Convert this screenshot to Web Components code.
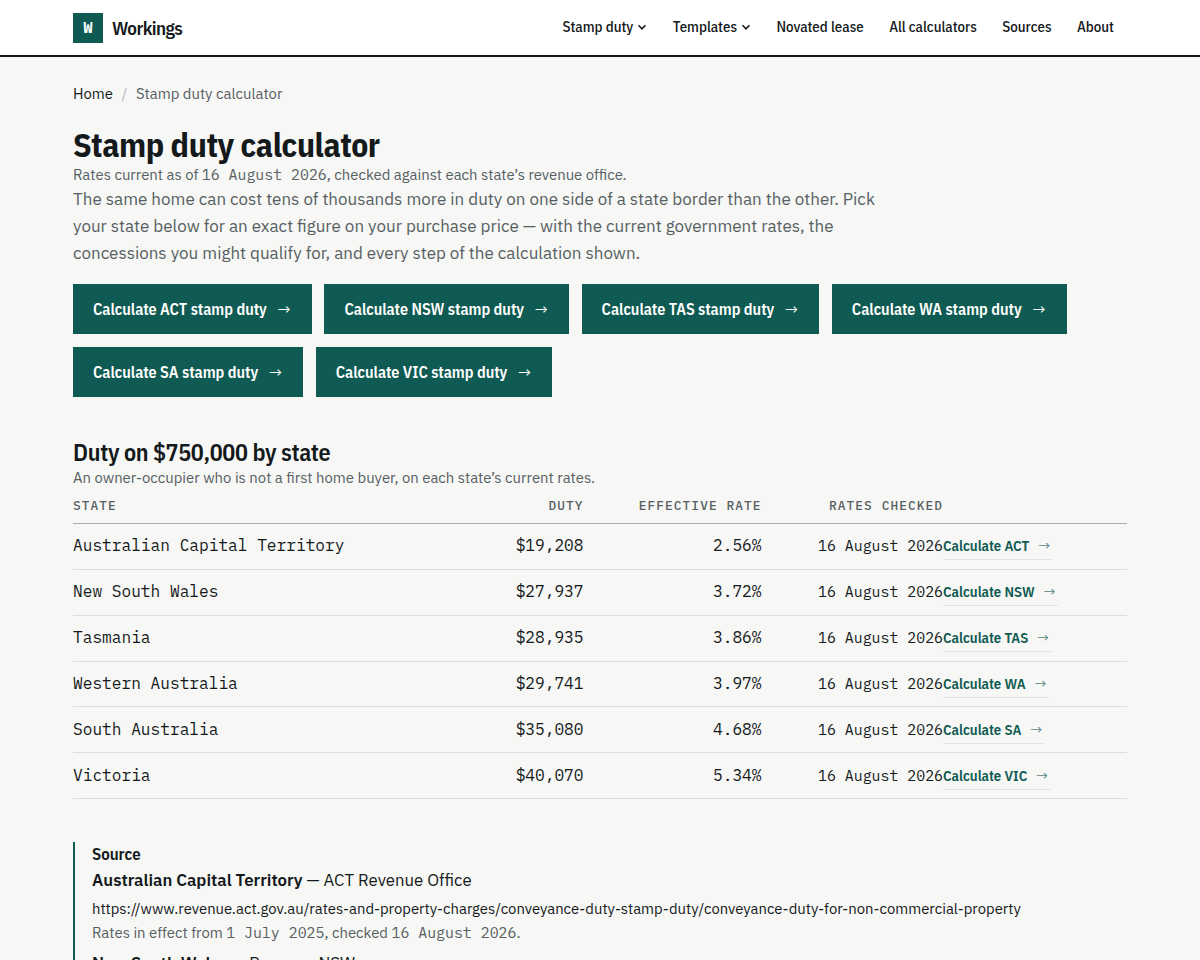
<!doctype html>
<html lang="en">
<head>
<meta charset="utf-8">
<title>Stamp duty calculator</title>
<style>
  html, body { margin: 0; height: 960px; overflow: hidden; }
  body {
    background: #f7f7f5;
    color: #14191b;
    font-family: "IBM Plex Sans", "Noto Sans", "Liberation Sans", sans-serif;
  }
</style>
</head>
<body>
<site-header></site-header>
<page-main>
  <bread-crumbs></bread-crumbs>
  <page-intro></page-intro>
  <state-buttons></state-buttons>
  <duty-table></duty-table>
  <source-list></source-list>
</page-main>

<script>
const MONO = `"IBM Plex Mono", "Liberation Mono", monospace`;
const COND = `"IBM Plex Sans Condensed", "IBM Plex Sans", "Noto Sans", sans-serif`;

const STATES = [
  { code: 'ACT', name: 'Australian Capital Territory', duty: '$19,208', rate: '2.56%' },
  { code: 'NSW', name: 'New South Wales', duty: '$27,937', rate: '3.72%' },
  { code: 'TAS', name: 'Tasmania', duty: '$28,935', rate: '3.86%' },
  { code: 'WA', name: 'Western Australia', duty: '$29,741', rate: '3.97%' },
  { code: 'SA', name: 'South Australia', duty: '$35,080', rate: '4.68%' },
  { code: 'VIC', name: 'Victoria', duty: '$40,070', rate: '5.34%' },
];

class SiteHeader extends HTMLElement {
  constructor() {
    super();
    const chev = `<svg width="10" height="10" viewBox="0 0 10 10" fill="none" stroke="currentColor" stroke-width="1.5"><path d="M1.5 3.2 5 6.8 8.5 3.2"/></svg>`;
    this.attachShadow({ mode: 'open' }).innerHTML = `
      <style>
        :host { display: block; background: #fff; border-bottom: 2px solid #14191b; }
        .bar { height: 55px; margin: 0 73px; display: flex; align-items: center; justify-content: space-between; }
        .brand { display: flex; align-items: center; gap: 9px; font: 600 19px ${COND}; letter-spacing: -0.03em; }
        .mark { width: 30px; height: 30px; background: #0f5a52; color: #fff; display: flex; align-items: center; justify-content: center; font: 700 15px ${MONO}; letter-spacing: 0; }
        nav { display: flex; gap: 25.4px; font: 500 14.88px ${COND}; padding-right: 13px; margin-top: -2px; }
        nav span { display: flex; align-items: center; gap: 4px; }
      </style>
      <div class="bar">
        <div class="brand"><div class="mark">W</div>Workings</div>
        <nav>
          <span>Stamp duty ${chev}</span>
          <span>Templates ${chev}</span>
          <span>Novated lease</span>
          <span>All calculators</span>
          <span>Sources</span>
          <span>About</span>
        </nav>
      </div>`;
  }
}

class PageMain extends HTMLElement {
  constructor() {
    super();
    this.attachShadow({ mode: 'open' }).innerHTML = `
      <style>:host { display: block; margin: 0 73px; }</style>
      <slot></slot>`;
  }
}

class BreadCrumbs extends HTMLElement {
  constructor() {
    super();
    this.attachShadow({ mode: 'open' }).innerHTML = `
      <style>
        :host { display: flex; gap: 8.6px; padding-top: 26px; height: 22px; line-height: 22px; font-size: 14.88px; color: #566063; }
        .home { color: #14191b; }
        .sep { color: #b4b9ba; }
      </style>
      <span class="home">Home</span><span class="sep">/</span><span>Stamp duty calculator</span>`;
  }
}

class PageIntro extends HTMLElement {
  constructor() {
    super();
    this.attachShadow({ mode: 'open' }).innerHTML = `
      <style>
        :host { display: block; margin-top: 20px; }
        h1 { margin: 0; font: 700 33.6px/40px ${COND}; letter-spacing: -0.012em; color: #14191b; }
        .asof { font-size: 14.88px; line-height: 19px; margin-bottom: 2px; color: #566063; }
        .asof code { font-family: ${MONO}; font-size: 14.88px; }
        p { margin: 0; max-width: 820px; font-size: 17.02px; line-height: 27px; color: #566063; }
      </style>
      <h1>Stamp duty calculator</h1>
      <div class="asof">Rates current as of <code>16 August 2026</code>, checked against each state’s revenue office.</div>
      <p>The same home can cost tens of thousands more in duty on one side of a state border than the other. Pick your state below for an exact figure on your purchase price — with the current government rates, the concessions you might qualify for, and every step of the calculation shown.</p>`;
  }
}

class StateButtons extends HTMLElement {
  constructor() {
    super();
    this.attachShadow({ mode: 'open' }).innerHTML = `
      <style>
        :host { display: flex; flex-wrap: wrap; gap: 13px 12.5px; margin-top: 17px; }
        a { display: flex; align-items: center; gap: 11px; height: 50px; padding: 0 21.5px 0 20px; background: #0f5a52; color: #fff; font: 600 16.08px ${COND}; box-sizing: border-box; }
        span { font-family: ${COND}; font-weight: 400; }
      </style>
      ${STATES.map(s => `<a>Calculate ${s.code} stamp duty <span>→</span></a>`).join('')}`;
  }
}

class DutyTable extends HTMLElement {
  constructor() {
    super();
    const rows = STATES.map(s => `
      <div class="row">
        <span class="cell">${s.name}</span>
        <span class="cell num">${s.duty}</span>
        <span class="cell num">${s.rate}</span>
        <span class="date">16 August 2026</span>
        <span class="go"><a>Calculate ${s.code} <i>→</i></a></span>
      </div>`).join('');
    this.attachShadow({ mode: 'open' }).innerHTML = `
      <style>
        :host { display: block; margin-top: 40px; }
        h2 { margin: 0; font: 600 24px/30px ${COND}; letter-spacing: -0.013em; }
        .sub { font-size: 14.88px; line-height: 20px; color: #566063; margin-top: 1px; }
        .head, .row { display: grid; grid-template-columns: 1fr 120px 178px 181.5px 184px; align-items: center; }
        .head { height: 36.1px; border-bottom: 1px solid #a9aeaf; font: 500 12.8px ${MONO}; letter-spacing: .085em; color: #566063; box-sizing: border-box; }
        .row { height: 45.83px; border-bottom: 1px solid #dcdedd; font: 16.16px ${MONO}; box-sizing: border-box; }
        .num { text-align: right; }
        .date { text-align: right; }
        .row .date { font-size: 14.88px; padding-bottom: 1.1px; }
        .cell { padding-bottom: 3.1px; }
        .go { font: 600 14.72px ${COND}; color: #0f5a52; padding-top: .8px; }
        a { display: inline-block; border-bottom: 1px solid #dfe5e2; padding: 3px 0 4px; }
        i { font-style: normal; font-family: ${COND}; font-weight: 400; opacity: .75; margin-left: 6px; padding-right: 3px; }
      </style>
      <h2>Duty on $750,000 by state</h2>
      <div class="sub">An owner-occupier who is not a first home buyer, on each state’s current rates.</div>
      <div class="head"><span>STATE</span><span class="num">DUTY</span><span class="num">EFFECTIVE RATE</span><span class="date">RATES CHECKED</span><span></span></div>
      ${rows}`;
  }
}

class SourceList extends HTMLElement {
  constructor() {
    super();
    this.attachShadow({ mode: 'open' }).innerHTML = `
      <style>
        :host { display: block; margin-top: 44px; border-left: 2px solid #0f5a52; padding: 0 0 0 17px; }
        .t { font: 600 16.8px/24px ${COND}; margin-top: -1px; }
        .name { font-size: 16.8px; line-height: 26px; margin-top: 1px; }
        b { font-weight: 600; }
        .url { font-size: 14.87px; line-height: 24px; margin-top: 4px; }
        .note { font-size: 14.88px; line-height: 23px; color: #566063; }
        code { font-family: ${MONO}; }
      </style>
      <div class="t">Source</div>
      <div class="name"><b>Australian Capital Territory</b> — ACT Revenue Office</div>
      <div class="url">https://www.revenue.act.gov.au/rates-and-property-charges/conveyance-duty-stamp-duty/conveyance-duty-for-non-commercial-property</div>
      <div class="note">Rates in effect from <code>1 July 2025</code>, checked <code>16 August 2026</code>.</div>
      <div class="name" style="margin-top:6px"><b>New South Wales</b> — Revenue NSW</div>`;
  }
}

customElements.define('site-header', SiteHeader);
customElements.define('page-main', PageMain);
customElements.define('bread-crumbs', BreadCrumbs);
customElements.define('page-intro', PageIntro);
customElements.define('state-buttons', StateButtons);
customElements.define('duty-table', DutyTable);
customElements.define('source-list', SourceList);
</script>
</body>
</html>
